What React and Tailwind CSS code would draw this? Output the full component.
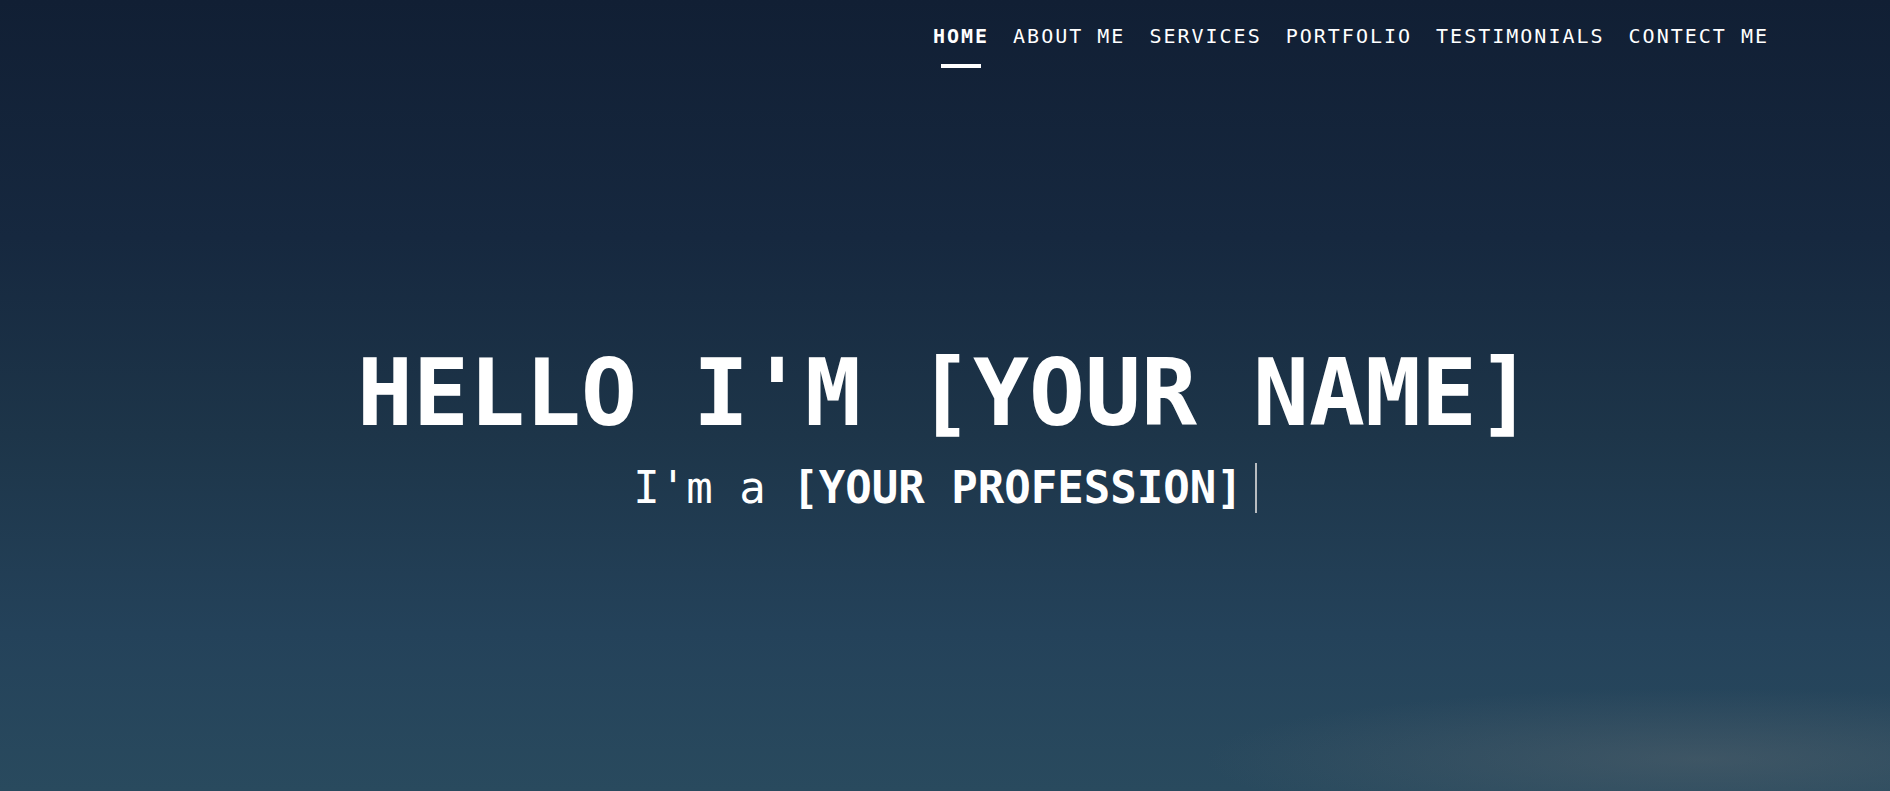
import React from "react";

const links = ["HOME", "ABOUT ME", "SERVICES", "PORTFOLIO", "TESTIMONIALS", "CONTECT ME"];

const NavBar = () => {
	return (
		<nav className="flex justify-end pr-[109px] pt-[24px]">
			<ul className="flex">
				{links.map((label, i) => (
					<li key={label} className="px-[12px] flex flex-col items-center">
						<a
							href="#"
							className={
								i === 0
									? "text-[20px] leading-[24px] tracking-[2px] text-white font-bold"
									: "text-[20px] leading-[24px] tracking-[2px] text-white"
							}
						>
							{label}
						</a>
						{i === 0 && <span className="mt-[16px] block w-[40px] h-[4px] bg-white" />}
					</li>
				))}
			</ul>
		</nav>
	);
};

const App = () => {
	return (
		<div
			className="relative w-full h-screen overflow-hidden text-white bg-[linear-gradient(180deg,#111f34_0%,#16283f_30%,#1d3549_55%,#24425a_80%,#294a5e_100%)]"
			style={{ fontFamily: '"DejaVu Sans Mono", monospace' }}
		>
			<div className="absolute inset-0 bg-[radial-gradient(ellipse_35%_12%_at_90%_96%,rgba(95,105,112,0.4),transparent_75%)]" />
			<div className="relative flex flex-col h-full">
				<NavBar />
				<div className="flex flex-col items-center pt-[270px]">
					<h1 className="text-[93px] leading-[110px] font-bold">HELLO I'M [YOUR NAME]</h1>
					<p className="mt-[12px] text-[44px] leading-[56px] flex items-center">
						<span>I'm a&nbsp;</span>
						<span className="font-bold">[YOUR PROFESSION]</span>
						<span className="ml-[12px] inline-block w-[2px] h-[50px] bg-[#b8bcc0]" />
					</p>
				</div>
			</div>
		</div>
	);
};

export default App;
